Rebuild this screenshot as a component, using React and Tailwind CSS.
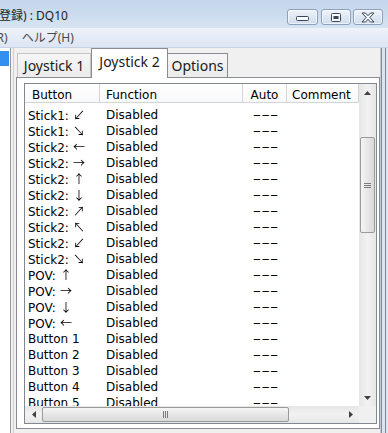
const rows = [
  ["Stick1: ", "↙"],
  ["Stick1: ", "↘"],
  ["Stick2: ", "←"],
  ["Stick2: ", "→"],
  ["Stick2: ", "↑"],
  ["Stick2: ", "↓"],
  ["Stick2: ", "↗"],
  ["Stick2: ", "↖"],
  ["Stick2: ", "↙"],
  ["Stick2: ", "↘"],
  ["POV: ", "↑"],
  ["POV: ", "→"],
  ["POV: ", "↓"],
  ["POV: ", "←"],
  ["Button 1", ""],
  ["Button 2", ""],
  ["Button 3", ""],
  ["Button 4", ""],
  ["Button 5", ""],
];

function Arrow({ dir }) {
  const pts = {
    up: "0,4 3.5,0 7,4",
    down: "0,0 7,0 3.5,4",
    left: "4,0 4,7 0,3.5",
    right: "0,0 0,7 4,3.5",
  }[dir];
  const vertical = dir === "up" || dir === "down";
  return (
    <svg width={vertical ? 7 : 4} height={vertical ? 4 : 7}>
      <polygon points={pts} fill="#404040" />
    </svg>
  );
}

function WinButton({ children, w }) {
  return (
    <div
      className={`${w} h-[16px] rounded-[3px] border border-[#8da0bb] bg-gradient-to-b from-[#eef3f9] to-[#cfdcec] shadow-[inset_0_0_0_1px_rgba(255,255,255,0.6)] flex items-center justify-center`}
    >
      {children}
    </div>
  );
}

export default function App() {
  return (
    <div className="w-[388px] h-[433px] overflow-hidden flex flex-col bg-[#f0f0f0] font-['Noto_Sans','Noto_Sans_CJK_JP',sans-serif]">
      {/* title bar */}
      <div className="h-[28px] shrink-0 flex items-start bg-gradient-to-b from-[#c3d6eb] to-[#d6e3f1]">
        <div className="mt-[8px] ml-[-1px] text-[12px] leading-[16px] text-[#1e1e1e] whitespace-nowrap">
          登録) : DQ10
        </div>
        <div className="ml-auto mt-[9px] mr-[5px] flex">
          <WinButton w="w-[31px]">
            <svg width="13" height="6" className="mt-[4px]">
              <rect x="0.5" y="0.5" width="12" height="4" rx="1" fill="#f7f9fc" stroke="#38465a" />
            </svg>
          </WinButton>
          <div className="w-[3px]" />
          <WinButton w="w-[30px]">
            <svg width="10" height="9">
              <rect x="0.5" y="0.5" width="9" height="8" rx="1" fill="#f7f9fc" stroke="#38465a" />
              <rect x="2.5" y="3" width="5" height="3" fill="#38465a" />
            </svg>
          </WinButton>
          <div className="w-[2px]" />
          <WinButton w="w-[30px]">
            <svg width="14" height="11" viewBox="0 0 14 11">
              <path
                d="M1 1 H4.5 L7 3.8 L9.5 1 H13 L8.8 5.5 L13 10 H9.5 L7 7.2 L4.5 10 H1 L5.2 5.5 Z"
                fill="#f7f9fc"
                stroke="#38465a"
                strokeWidth="1"
                strokeLinejoin="round"
              />
            </svg>
          </WinButton>
        </div>
      </div>

      {/* menu bar */}
      <div className="h-[20px] shrink-0 flex items-center bg-gradient-to-b from-[#eef2fa] to-[#dde5f3] border-b border-[#c9d3e3] text-[12px] text-[#4a4a4a] whitespace-nowrap">
        <span className="ml-[-7px]">(R)</span>
        <span className="ml-[14px]">ヘルプ(H)</span>
      </div>

      {/* body */}
      <div className="flex-1 flex bg-[#f0f0f0]">
        <div className="w-[10px] bg-white pt-[3px]">
          <div className="w-[9px] h-[15px] bg-[#3390f0]" />
        </div>
        <div className="w-[1px] bg-[#9a9a9a]" />
        <div className="w-[2px]" />
        <div className="w-[1px] bg-[#d2d2d2]" />
        <div className="w-[2px]" />

        {/* tab control */}
        <div className="w-[364px] flex flex-col">
          <div className="h-[29px] flex items-end pl-[1px] text-[14px] text-[#1a1a1a] whitespace-nowrap">
            <div className="w-[74px] h-[24px] border border-b-0 border-[#c4c4c4] bg-gradient-to-b from-[#f6f6f6] to-[#ebebeb] flex items-center justify-center">
              Joystick 1
            </div>
            <div className="relative z-10 w-[77px] h-[30px] mb-[-1px] border border-b-0 border-[#898c95] bg-white flex items-start justify-center pt-[2px]">
              Joystick 2
            </div>
            <div className="w-[60px] h-[24px] border border-b-0 border-l-0 border-[#898c95] bg-gradient-to-b from-[#f6f6f6] to-[#ebebeb] flex items-center justify-center">
              Options
            </div>
          </div>

          <div className="h-[352px] border border-[#898c95] bg-white pt-[5px] pl-[7px]">
            {/* list view */}
            <div className="w-[353px] h-[341px] border border-[#828790] bg-white flex flex-col font-['DejaVu_Sans',sans-serif] text-[12px] text-black">
              <div className="flex h-[322px]">
                <div className="w-[334px] overflow-hidden flex flex-col">
                  <div className="h-[19px] shrink-0 flex border-b border-[#d5d5d5] bg-gradient-to-b from-white to-[#f7f8f9] leading-[16px] whitespace-nowrap">
                    <div className="w-[75px] pl-[7px] pt-[3px] border-r border-[#d5d5d5]">Button</div>
                    <div className="w-[143px] pl-[6px] pt-[3px] border-r border-[#d5d5d5]">Function</div>
                    <div className="w-[44px] pt-[3px] text-center border-r border-[#d5d5d5]">Auto</div>
                    <div className="w-[72px] pl-[5px] pt-[3px] border-r border-[#d5d5d5]">Comment</div>
                  </div>
                  <div className="pt-[4px] overflow-hidden">
                    {rows.map(([label, arrow]) => (
                      <div key={label + arrow} className="h-[16px] flex leading-[16px] whitespace-nowrap">
                        <div className="w-[75px] pl-[3px]">
                          {label}
                          {arrow && (
                            <span className="inline-block will-change-transform font-['Noto_Sans_CJK_JP',sans-serif] text-[12px] text-black">
                              {arrow}
                            </span>
                          )}
                        </div>
                        <div className="w-[143px] pl-[6px]">Disabled</div>
                        <div className="w-[44px] text-center">
                          <span className="inline-block scale-x-[2]">---</span>
                        </div>
                        <div className="w-[72px]" />
                      </div>
                    ))}
                  </div>
                </div>

                {/* vertical scrollbar */}
                <div className="w-[17px] flex flex-col bg-gradient-to-r from-[#e6e6e6] via-[#f2f2f2] to-[#e6e6e6]">
                  <div className="h-[17px] flex items-center justify-center">
                    <Arrow dir="up" />
                  </div>
                  <div className="h-[36px]" />
                  <div className="h-[96px] mx-[1px] rounded-[2px] border border-[#9a9a9a] bg-gradient-to-r from-[#f5f5f5] to-[#d9d9d9] flex items-center justify-center">
                    <svg width="7" height="7">
                      <path d="M0 1.5 H7 M0 3.5 H7 M0 5.5 H7" stroke="#7a7a7a" strokeWidth="1" />
                    </svg>
                  </div>
                  <div className="flex-1" />
                  <div className="h-[17px] flex items-center justify-center">
                    <Arrow dir="down" />
                  </div>
                </div>
              </div>

              <div className="flex h-[17px]">
                {/* horizontal scrollbar */}
                <div className="w-[334px] flex bg-gradient-to-b from-[#e6e6e6] via-[#f2f2f2] to-[#e6e6e6]">
                  <div className="w-[17px] flex items-center justify-center">
                    <Arrow dir="left" />
                  </div>
                  <div className="w-[247px] my-[1px] rounded-[2px] border border-[#9a9a9a] bg-gradient-to-b from-[#f5f5f5] to-[#d9d9d9] flex items-center justify-center">
                    <svg width="7" height="7">
                      <path d="M1.5 0 V7 M3.5 0 V7 M5.5 0 V7" stroke="#7a7a7a" strokeWidth="1" />
                    </svg>
                  </div>
                  <div className="flex-1" />
                  <div className="w-[17px] flex items-center justify-center">
                    <Arrow dir="right" />
                  </div>
                </div>
                <div className="w-[17px] bg-[#f0f0f0]" />
              </div>
            </div>
          </div>
        </div>

        {/* window frame */}
        <div className="w-[1px] bg-[#c6c6c6]" />
        <div className="w-[1px] bg-[#7f8c9c]" />
        <div className="w-[3px] bg-[#dbe4ee]" />
        <div className="w-[1px] bg-[#7f8c9c]" />
        <div className="flex-1 bg-[#dbe4ee]" />
      </div>
    </div>
  );
}
